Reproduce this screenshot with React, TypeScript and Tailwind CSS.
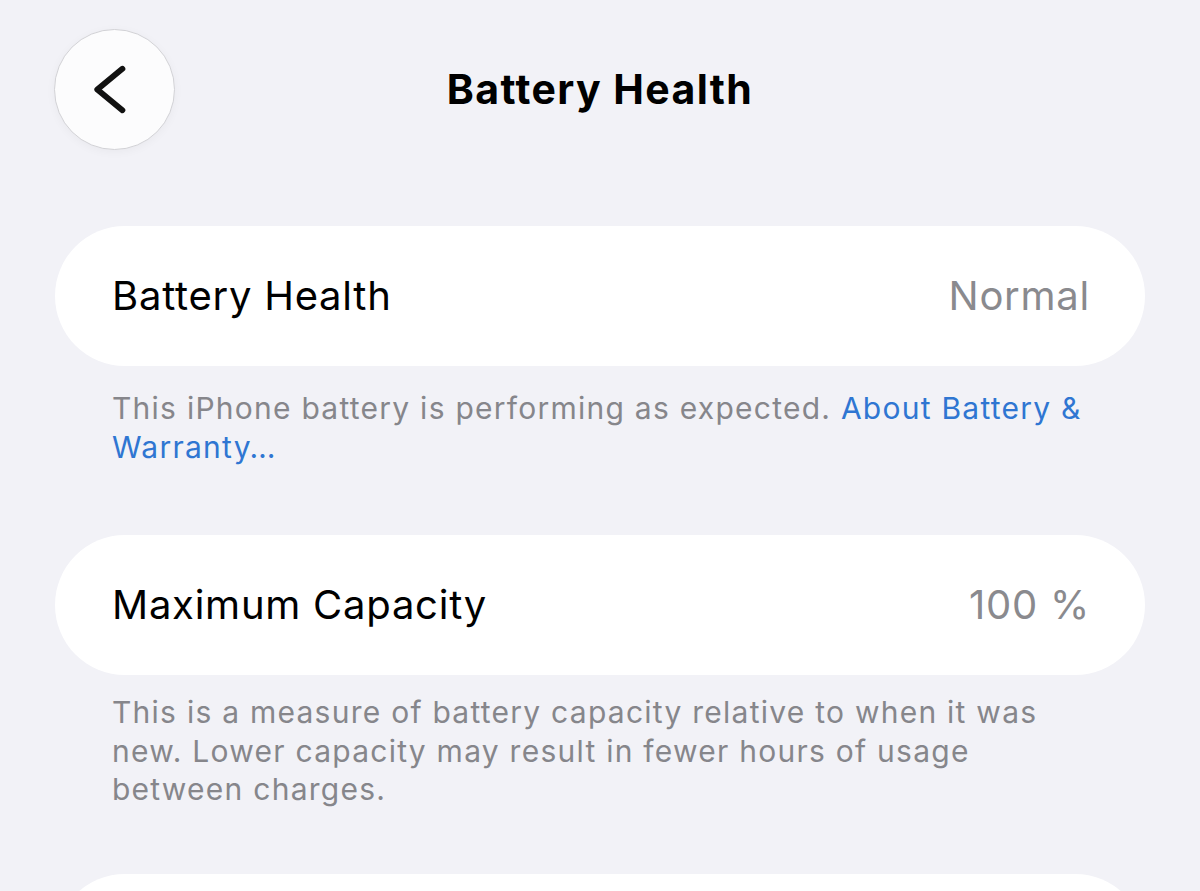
import React from "react";

type Row = { label?: string; value?: string };

const SettingsCard = ({ label, value }: Row) => (
  <div className="flex h-[140px] items-center justify-between rounded-full bg-white pl-[57px] pr-[55px] tracking-[0.75px]">
    {label && <span className="text-[40px] text-black">{label}</span>}
    {value && <span className="text-[40px] text-[#8a8a8e]">{value}</span>}
  </div>
);

const BackButton = () => (
  <button className="flex h-[121px] w-[121px] shrink-0 items-center justify-center rounded-full border border-[#d2d2d6] bg-[#fcfcfd] shadow-[0_2px_10px_rgba(0,0,0,0.04)]">
    <svg width="121" height="121" viewBox="0 0 121 121" fill="none">
      {/* chevron pointing left */}
      <path
        d="M68.5 39.5 L43 60.5 L68.5 81.5"
        stroke="#111"
        strokeWidth="6"
        strokeLinecap="round"
        strokeLinejoin="round"
      />
    </svg>
  </button>
);

export default function App() {
  return (
    <div className="h-[891px] overflow-hidden bg-[#f2f2f7] font-['Inter',sans-serif] antialiased">
      {/* Nav bar */}
      <div className="flex items-center px-[54px] pt-[29px]">
        <BackButton />
        <h1 className="flex-1 text-center text-[41px] font-bold tracking-[1.4px] text-black">
          Battery Health
        </h1>
        <div className="w-[121px] shrink-0" />
      </div>

      <div className="px-[55px]">
        <div className="mt-[76px]">
          <SettingsCard label="Battery Health" value="Normal" />
        </div>
        <p className="mt-[23px] px-[57px] text-[30px] leading-[38.5px] tracking-[1.25px] text-[#86868b]">
          This iPhone battery is performing as expected.{" "}
          <span className="text-[#2f76d2]">About Battery &amp; Warranty…</span>
        </p>

        <div className="mt-[69px]">
          <SettingsCard label="Maximum Capacity" value="100 %" />
        </div>
        <p className="mt-[18px] px-[57px] text-[30px] leading-[38.5px] tracking-[1.25px] text-[#86868b]">
          This is a measure of battery capacity relative to when it was new. Lower capacity may
          result in fewer hours of usage between charges.
        </p>

        {/* next group, only its top edge is on screen */}
        <div className="mt-[65px]">
          <SettingsCard />
        </div>
      </div>
    </div>
  );
}
